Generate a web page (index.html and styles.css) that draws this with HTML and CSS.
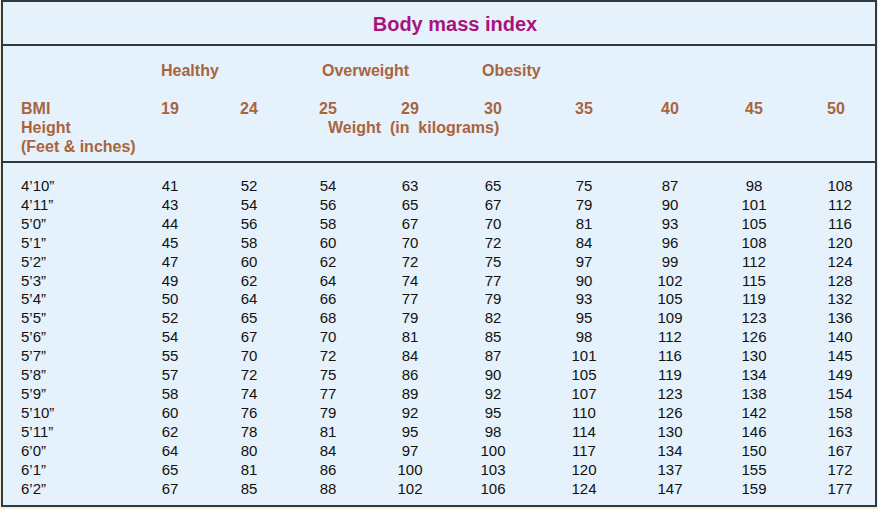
FILE: index.html
```html
<!DOCTYPE html>
<html lang="en">
<head>
<meta charset="utf-8">
<title>Body mass index</title>
<link rel="stylesheet" href="styles.css">
</head>
<body>
<div class="chart">
  <div class="title">Body mass index</div>
  <div class="head grid">
    <div class="group g-healthy">Healthy</div>
    <div class="group g-over">Overweight</div>
    <div class="group g-obese">Obesity</div>
    <div class="spacer"></div>
    <div class="lbl r3">BMI</div>
    <div class="num">19</div><div class="num">24</div><div class="num">25</div><div class="num">29</div><div class="num">30</div><div class="num">35</div><div class="num">40</div><div class="num">45</div><div class="num last">50</div>
    <div class="lbl r4">Height</div>
    <div class="weight">Weight&nbsp; (in&nbsp; kilograms)</div>
    <div class="lbl r5">(Feet &amp; inches)</div>
  </div>
  <div class="body grid" id="rows">
    <div class="h">4’10”</div><div>41</div><div>52</div><div>54</div><div>63</div><div>65</div><div>75</div><div>87</div><div>98</div><div>108</div>
    <div class="h">4’11”</div><div>43</div><div>54</div><div>56</div><div>65</div><div>67</div><div>79</div><div>90</div><div>101</div><div>112</div>
    <div class="h">5’0”</div><div>44</div><div>56</div><div>58</div><div>67</div><div>70</div><div>81</div><div>93</div><div>105</div><div>116</div>
    <div class="h">5’1”</div><div>45</div><div>58</div><div>60</div><div>70</div><div>72</div><div>84</div><div>96</div><div>108</div><div>120</div>
    <div class="h">5’2”</div><div>47</div><div>60</div><div>62</div><div>72</div><div>75</div><div>97</div><div>99</div><div>112</div><div>124</div>
    <div class="h">5’3”</div><div>49</div><div>62</div><div>64</div><div>74</div><div>77</div><div>90</div><div>102</div><div>115</div><div>128</div>
    <div class="h">5’4”</div><div>50</div><div>64</div><div>66</div><div>77</div><div>79</div><div>93</div><div>105</div><div>119</div><div>132</div>
    <div class="h">5’5”</div><div>52</div><div>65</div><div>68</div><div>79</div><div>82</div><div>95</div><div>109</div><div>123</div><div>136</div>
    <div class="h">5’6”</div><div>54</div><div>67</div><div>70</div><div>81</div><div>85</div><div>98</div><div>112</div><div>126</div><div>140</div>
    <div class="h">5’7”</div><div>55</div><div>70</div><div>72</div><div>84</div><div>87</div><div>101</div><div>116</div><div>130</div><div>145</div>
    <div class="h">5’8”</div><div>57</div><div>72</div><div>75</div><div>86</div><div>90</div><div>105</div><div>119</div><div>134</div><div>149</div>
    <div class="h">5’9”</div><div>58</div><div>74</div><div>77</div><div>89</div><div>92</div><div>107</div><div>123</div><div>138</div><div>154</div>
    <div class="h">5’10”</div><div>60</div><div>76</div><div>79</div><div>92</div><div>95</div><div>110</div><div>126</div><div>142</div><div>158</div>
    <div class="h">5’11”</div><div>62</div><div>78</div><div>81</div><div>95</div><div>98</div><div>114</div><div>130</div><div>146</div><div>163</div>
    <div class="h">6’0”</div><div>64</div><div>80</div><div>84</div><div>97</div><div>100</div><div>117</div><div>134</div><div>150</div><div>167</div>
    <div class="h">6’1”</div><div>65</div><div>81</div><div>86</div><div>100</div><div>103</div><div>120</div><div>137</div><div>155</div><div>172</div>
    <div class="h">6’2”</div><div>67</div><div>85</div><div>88</div><div>102</div><div>106</div><div>124</div><div>147</div><div>159</div><div>177</div>
  </div>
</div>
</body>
</html>
```

FILE: styles.css
```css
html, body {
  margin: 0;
  padding: 0;
}
body {
  background: #f6eedc;
  font-family: "Liberation Sans", Arial, sans-serif;
  width: 878px;
  height: 509px;
  overflow: hidden;
}
.chart {
  margin-left: 1px;
  width: 872px;
  border: 2px solid #2e3940;
  background: #e6f2fb;
}
.title {
  height: 39px;
  line-height: 39px;
  padding-top: 3px;
  padding-left: 32px;
  text-align: center;
  font-size: 20px;
  font-weight: bold;
  color: #a8137c;
  border-bottom: 2px solid #2e3940;
}
.grid {
  display: grid;
  grid-template-columns: 111px 76px 82px 76px 88px 78px 104px 68px 100px 72px;
  padding-left: 18px;
}
.head {
  padding-top: 16px;
  padding-bottom: 4.5px;
  font-size: 16px;
  font-weight: bold;
  color: #a8643f;
  line-height: 18.9px;
  border-bottom: 2px solid #2e3940;
  white-space: nowrap;
}
.group {
  grid-row: 1;
}
.g-healthy {
  grid-column: 2 / 4;
  padding-left: 29px;
}
.g-over {
  grid-column: 4 / 6;
  padding-left: 32px;
}
.g-obese {
  grid-column: 6 / 8;
  padding-left: 28px;
}
.spacer {
  grid-row: 2;
  grid-column: 1 / -1;
  height: 18.9px;
}
.num {
  grid-row: 3;
  text-align: center;
}
.num.last {
  padding-right: 8px;
}
.lbl {
  grid-column: 1;
}
.r3 {
  grid-row: 3;
}
.r4 {
  grid-row: 4;
}
.r5 {
  grid-row: 5;
  grid-column: 1 / 4;
}
.weight {
  grid-row: 4;
  grid-column: 4 / -1;
  padding-left: 38px;
}
.body {
  padding-top: 14px;
  padding-bottom: 6.7px;
  font-size: 15px;
  line-height: 18.9px;
  color: #111;
  text-align: center;
}
.body .h {
  text-align: left;
}
```
